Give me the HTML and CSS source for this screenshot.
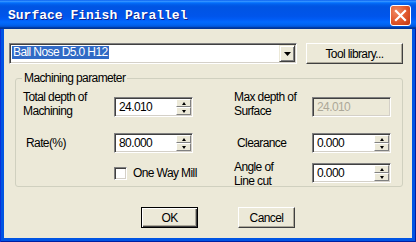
FILE: index.html
```html
<!DOCTYPE html>
<html lang="en">
<head>
    <meta charset="UTF-8">
    <title>Surface Finish Parallel</title>
    <link rel="stylesheet" href="styles.css">
</head>
<body>

<div class="window">
    <div class="titlebar">
        <span class="title">Surface Finish Parallel</span>
        <span class="close">
            <svg width="21" height="21" viewBox="0 0 21 21">
                <path d="M6 6 L15 15 M15 6 L6 15" stroke="#fff" stroke-width="2.2" stroke-linecap="square"/>
            </svg>
        </span>
    </div>

    <div class="client">
        <div class="toolrow">
            <div class="combo">
                <span class="combo-text">Ball Nose D5.0 H12</span>
                <span class="drop">
                    <svg width="7" height="4" viewBox="0 0 7 4"><path d="M0 0 H7 L3.5 4 Z" fill="#000"/></svg>
                </span>
            </div>
            <div class="btn tool-btn">Tool library...</div>
        </div>

        <fieldset class="group">
            <legend>Machining parameter</legend>

            <div class="row">
                <div class="lbl two top-a">Total depth of<br>Machining</div>
                <div class="spin"><span class="val">24.010</span><span class="arrows"><span class="up"></span><span class="down"></span></span></div>
                <div></div>
                <div class="lbl two top-a">Max depth of<br>Surface</div>
                <div class="edit disabled"><span class="val">24.010</span></div>
            </div>

            <div class="row row-b">
                <div class="lbl indent">Rate(%)</div>
                <div class="spin"><span class="val">80.000</span><span class="arrows"><span class="up"></span><span class="down"></span></span></div>
                <div></div>
                <div class="lbl indent">Clearance</div>
                <div class="spin"><span class="val">0.000</span><span class="arrows"><span class="up"></span><span class="down"></span></span></div>
            </div>

            <div class="row row-c">
                <div></div>
                <div class="check"><span class="box"></span>One Way Mill</div>
                <div></div>
                <div class="lbl two top-c">Angle of<br>Line cut</div>
                <div class="spin"><span class="val">0.000</span><span class="arrows"><span class="up"></span><span class="down"></span></span></div>
            </div>
        </fieldset>

        <div class="buttons">
            <div class="btn default">OK</div>
            <div class="btn">Cancel</div>
        </div>
    </div>
</div>

</body>
</html>
```

FILE: styles.css
```css
body {
    margin: 0;
    font-family: "Liberation Sans", Arial, sans-serif;
    font-size: 12px;
    letter-spacing: -0.6px;
    color: #000;
}
.window {
    width: 416px;
    height: 242px;
    display: flex;
    flex-direction: column;
    background: #0054E3;
    box-shadow: inset 1px 0 #0831D9, inset -1px 0 #001EA0, inset 0 -1px #001EA0;
}
.titlebar {
    height: 29px;
    flex: none;
    display: flex;
    align-items: flex-start;
    padding: 0 5px 0 8px;
    background: linear-gradient(to bottom, #0058EE 0%, #3A93FF 4%, #288EFF 6%, #127DFF 8%, #036FFC 10%, #0262EE 14%, #0057E5 20%, #0054E3 24%, #0055EB 56%, #005BF5 66%, #026AFE 76%, #0062EF 86%, #0052D6 92%, #0040AB 94%, #003092 100%);
}
.title {
    flex: 1;
    padding-top: 8px;
    font: bold 13px/15px "Liberation Mono", monospace;
    letter-spacing: 0;
    color: #fff;
    text-shadow: 1px 1px #0A1E8A;
}
.close {
    margin-top: 5px;
    width: 21px;
    height: 21px;
    box-sizing: border-box;
    border: 1px solid #fff;
    border-radius: 3px;
    background: radial-gradient(circle at 30% 30%, #F08A64 0%, #E25A2E 50%, #C2350F 100%);
    display: flex;
    align-items: center;
    justify-content: center;
}
.close svg {
    margin: -1px;
}
.client {
    flex: 1;
    margin: 0 4px 4px;
    padding: 14px 0 0 5px;
    background: #ECE9D8;
}
.toolrow {
    display: flex;
    gap: 9px;
    height: 21px;
}
.combo {
    width: 288px;
    box-sizing: border-box;
    border: 1px solid;
    border-color: #808080 #fff #fff #808080;
    box-shadow: inset 1px 1px #404040, inset -1px -1px #D4D0C8;
    background: #fff;
    display: flex;
    align-items: flex-start;
    padding: 1px;
}
.combo-text {
    margin: 1px 0 0 1px;
    padding: 0 1px;
    line-height: 13px;
    background: #316AC5;
    color: #fff;
}
.drop {
    margin-left: auto;
    width: 16px;
    height: 17px;
    box-sizing: border-box;
    background: #ECE9D8;
    border: 1px solid;
    border-color: #ECE9D8 #404040 #404040 #ECE9D8;
    box-shadow: inset 1px 1px #fff, inset -1px -1px #808080;
    display: flex;
    align-items: center;
    justify-content: center;
}
.btn {
    box-sizing: border-box;
    height: 21px;
    background: #ECE9D8;
    border: 1px solid;
    border-color: #fff #404040 #404040 #fff;
    box-shadow: inset -1px -1px #ACA899;
    display: flex;
    align-items: center;
    justify-content: center;
}
.tool-btn {
    width: 97px;
}
.group {
    margin: 8px 0 0 6px;
    width: 388px;
    box-sizing: border-box;
    padding: 12px 0 3px 7px;
    border: 1px solid #D0D0BF;
    border-radius: 3px;
    min-inline-size: 0;
}
.group legend {
    padding: 0 2px;
    margin-left: -1px;
    line-height: 13px;
}
.row {
    display: grid;
    grid-template-columns: 91px 79px 41px 78px 79px;
    grid-template-rows: 20px;
    height: 20px;
    align-items: center;
}
.row-b {
    margin-top: 16px;
}
.row-c {
    margin-top: 10px;
}
.lbl {
    line-height: 14px;
    white-space: nowrap;
}
.lbl.two {
    align-self: start;
}
.top-a {
    margin-top: -7px;
}
.top-c {
    margin-top: -3px;
}
.indent {
    padding-left: 3px;
}
.spin, .edit {
    height: 20px;
    box-sizing: border-box;
    border: 1px solid;
    border-color: #808080 #fff #fff #808080;
    box-shadow: inset 1px 1px #404040, inset -1px -1px #D4D0C8;
    background: #fff;
    display: flex;
    padding: 1px;
}
.val {
    flex: 1;
    padding: 2px 0 0 3px;
    line-height: 13px;
}
.disabled {
    background: #ECE9D8;
    color: #ACA899;
}
.arrows {
    width: 15px;
    display: flex;
    flex-direction: column;
}
.up, .down {
    flex: 1;
    box-sizing: border-box;
    background: #ECE9D8;
    border: 1px solid;
    border-color: #fff #808080 #808080 #fff;
    display: flex;
    align-items: center;
    justify-content: center;
}
.up::after, .down::after {
    content: "";
    border-left: 2.5px solid transparent;
    border-right: 2.5px solid transparent;
}
.up::after {
    border-bottom: 3px solid #000;
}
.down::after {
    border-top: 3px solid #000;
}
.check {
    display: flex;
    align-items: center;
    gap: 6px;
    white-space: nowrap;
}
.box {
    flex: none;
    width: 13px;
    height: 13px;
    box-sizing: border-box;
    border: 1px solid;
    border-color: #808080 #fff #fff #808080;
    box-shadow: inset 1px 1px #404040, inset -1px -1px #D4D0C8;
    background: #fff;
}
.buttons {
    display: flex;
    gap: 40px;
    margin: 20px 0 0 132px;
}
.buttons .btn {
    width: 57px;
}
.btn.default {
    border-color: #000;
    box-shadow: inset 1px 1px #fff, inset -1px -1px #404040, inset -2px -2px #ACA899;
}
```
